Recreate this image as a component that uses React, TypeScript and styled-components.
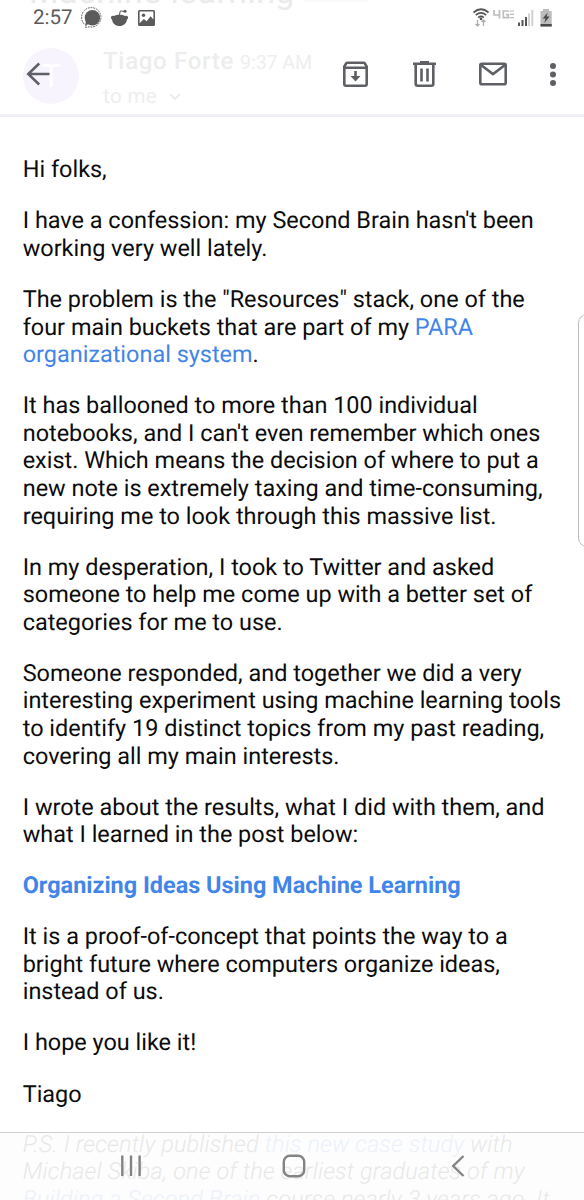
import React from "react";
import styled, { createGlobalStyle } from "styled-components";

const GlobalStyle = createGlobalStyle`
  * { box-sizing: border-box; }
  html, body { margin: 0; padding: 0; background: #fff; overflow: hidden; }
`;

const Screen = styled.main`
  position: relative;
  display: flex;
  flex-direction: column;
  width: 584px;
  height: 1200px;
  overflow: hidden;
  background: #fff;
  font-family: Roboto, "Liberation Sans", sans-serif;
  text-rendering: geometricPrecision;
`;

const Header = styled.header`
  position: relative;
  flex: none;
  height: 117px;
  border-bottom: 3px solid #eef0f3;
  overflow: hidden;
`;

const StatusBar = styled.div`
  position: relative;
  display: flex;
  justify-content: space-between;
  height: 36px;
  padding: 0 31px 0 33px;
`;

const StatusGroup = styled.div`
  display: flex;
  align-items: center;
`;

const Clock = styled.time`
  width: 47px;
  font-size: 20.5px;
  line-height: 38px;
  color: #5b5b5b;
`;

const Toolbar = styled.div`
  position: relative;
  display: flex;
  align-items: center;
  height: 75px;
  padding: 0 14px 0 22px;
`;

const ToolButton = styled.button<{ $gap?: number }>`
  display: flex;
  margin: 0 0 0 ${(p) => p.$gap ?? 0}px;
  padding: 0;
  border: 0;
  background: none;
  color: #5f6065;
`;

const Underlay = styled.div`
  position: absolute;
  inset: 0;
  white-space: nowrap;
`;

const Subject = styled.div`
  position: absolute;
  left: 29px;
  top: -28px;
  font: 400 34px/40px Roboto, sans-serif;
  letter-spacing: 0.4px;
  color: #ebebeb;
`;

const LabelEdge = styled.div`
  position: absolute;
  left: 304px;
  top: 0;
  width: 65px;
  height: 2px;
  background: #fafafa;
`;

const Avatar = styled.div`
  position: absolute;
  left: 23px;
  top: 48px;
  width: 56px;
  height: 56px;
  border-radius: 50%;
  background: #f7f4fd;
  color: #fff;
  font: 32px/56px Roboto, sans-serif;
  text-align: center;
`;

const Sender = styled.div`
  position: absolute;
  left: 103px;
  top: 45px;
  display: flex;
  align-items: baseline;
  font: 500 24px/32px Roboto, sans-serif;
  letter-spacing: 0.7px;
  color: #ededed;
`;

const SentAt = styled.span`
  margin-left: 6px;
  font-size: 19.6px;
  font-weight: 400;
  letter-spacing: -0.1px;
  color: #eeeeee;
`;

const Recipient = styled.div`
  position: absolute;
  left: 103px;
  top: 83px;
  display: flex;
  align-items: center;
  gap: 12px;
  font: 20.5px/28px Roboto, sans-serif;
  letter-spacing: 0.4px;
  color: #eeeeee;
`;

const Letter = styled.article`
  flex: none;
  padding: 39.3px 0 0 22.7px;
  font-size: 23.44px;
  line-height: 27.6px;
  color: #0c0c0c;
  white-space: nowrap;
`;

const Paragraph = styled.p<{ $faded?: boolean }>`
  margin: 0 0 23.45px;
  font-style: ${(p) => (p.$faded ? "italic" : "normal")};
  font-weight: ${(p) => (p.$faded ? 300 : 400)};
  letter-spacing: ${(p) => (p.$faded ? 0.15 : 0)}px;
  color: ${(p) => (p.$faded ? "#dedede" : "inherit")};
  &:last-child { margin-top: -0.9px; }
`;

const Line = styled.span`
  display: block;
`;

const Link = styled.a<{ $bold?: boolean; $faded?: boolean }>`
  color: ${(p) => (p.$faded ? "#e4ecfa" : "#4285e8")};
  font-weight: ${(p) => (p.$bold ? 700 : "inherit")};
`;

const EdgeHandle = styled.div`
  position: absolute;
  left: 578px;
  top: 314px;
  width: 20px;
  height: 233px;
  border: 1px solid #bcbcbc;
  border-radius: 9px;
  background: #fff;
`;

const NavShade = styled.div`
  position: absolute;
  left: 0;
  bottom: 0;
  width: 584px;
  height: 68px;
  border-top: 1px solid #cfcfcf;
  background: rgba(248, 248, 248, 0.35);
`;

const NavIcons = styled.nav`
  display: flex;
  align-items: center;
  height: 65px;
  padding-left: 119px;
  color: #838383;
`;

const NavButton = styled.button<{ $gap?: number }>`
  display: flex;
  margin: 0 0 0 ${(p) => p.$gap ?? 0}px;
  padding: 0;
  border: 0;
  background: none;
  color: inherit;
`;

const paragraphs: React.ReactNode[][] = [
  ["Hi folks,"],
  ["I have a confession: my Second Brain hasn't been", "working very well lately."],
  [
    "The problem is the \"Resources\" stack, one of the",
    <>four main buckets that are part of my <Link>PARA</Link></>,
    <><Link>organizational system</Link>.</>,
  ],
  [
    "It has ballooned to more than 100 individual",
    "notebooks, and I can't even remember which ones",
    "exist. Which means the decision of where to put a",
    "new note is extremely taxing and time-consuming,",
    "requiring me to look through this massive list.",
  ],
  [
    "In my desperation, I took to Twitter and asked",
    "someone to help me come up with a better set of",
    "categories for me to use.",
  ],
  [
    "Someone responded, and together we did a very",
    "interesting experiment using machine learning tools",
    "to identify 19 distinct topics from my past reading,",
    "covering all my main interests.",
  ],
  ["I wrote about the results, what I did with them, and", "what I learned in the post below:"],
  [<Link $bold>Organizing Ideas Using Machine Learning</Link>],
  [
    "It is a proof-of-concept that points the way to a",
    "bright future where computers organize ideas,",
    "instead of us.",
  ],
  ["I hope you like it!"],
  ["Tiago"],
];

const postscript: React.ReactNode[] = [
  <>P.S. I recently published <Link $faded>this new case study</Link> with</>,
  "Michael Skiba, one of the earliest graduates of my",
  <><Link $faded>Building a Second Brain</Link> course nearly 3 years ago. It</>,
];

const NotificationIcons = () => (
  <svg width="76" height="24" viewBox="80 5 76 24" fill="#5b5b5b">
    <circle cx="92.4" cy="16.7" r="7.7" />
    <path d="M86 20l-.8 4.3 5-1.5z" />
    <path d="M86.2 24.6a9.7 9.7 0 1 1 3 1.2l-3.8.6z" fill="none" stroke="#5b5b5b" strokeWidth="1" strokeDasharray="1.8 .9" />
    <path d="M111 16.5c0-1.6 1.4-2.3 2.9-1.6 3-1.7 8.2-1.7 11.2 0 1.5-.7 3 0 3 1.6 0 1-.5 1.7-1.2 2-.2 3.9-3.5 6.5-7.4 6.5s-7.2-2.6-7.4-6.5c-.7-.3-1.1-1-1.1-2z" />
    <path d="M119.3 14.5l1-4.5 4 .4" fill="none" stroke="#5b5b5b" strokeWidth="1" />
    <circle cx="125" cy="10.2" r="1.5" />
    <path fillRule="evenodd" d="M139.5 9h14q1.5 0 1.5 1.500v13q0 1.500-1.500 1.500h-14q-1.500 0-1.500-1.500v-13Q138 9 139.500 9zm.1 1.600v11.600l4.200-4.200 2.800 2.200 4-5 2.800 3.300v-7.900z" />
    <circle cx="143.5" cy="14.2" r="1.7" />
  </svg>
);

const SignalIcons = () => (
  <svg width="82" height="24" viewBox="471 5 82 24">
    <g fill="none" stroke="#555" strokeWidth="1.7">
      <path d="M473.5 11.5q7.5-6.5 15 0M475.8 14.2q5.200-4.500 10.400 0M478.200 16.600q2.800-2.300 5.600 0" />
    </g>
    <circle cx="481" cy="17.9" r="1.3" fill="#555" />
    <path d="M477.5 19v6m-2-2 2 2 2-2M483.5 25v-6m-2 2 2-2 2 2" fill="none" stroke="#aaa" strokeWidth="1.2" />
    <g fill="none" stroke="#bdbdbd" strokeWidth="1.7">
      <path d="M494 9v5h6.500M499.500 9v8.500M508.800 10H503.300v6.600h5v-3h-2.500" />
      <path d="M509.500 10h4.500M510 13.300h4M509.500 16.600h4.500" strokeWidth="1.2" />
    </g>
    <g strokeWidth="2">
      <path d="M519 25v-3.500M522.500 25v-6M526 25v-9" stroke="#555" />
      <path d="M529 25V12.500M532.300 25V9" stroke="#d2d2d2" />
    </g>
    <path d="M543 8h6v2h2.700v15.500h-11.200V10h2.500z" fill="#bcbcbc" />
    <path d="M540.500 23h11.200v2.500h-11.200zM547.700 11.500l-5 6h2.800l-1.200 4.500 5.300-6.500h-3z" fill="#494949" />
  </svg>
);

const App = () => (
  <Screen>
    <GlobalStyle />
    <Header>
      <Underlay>
        <Subject>Machine learning</Subject>
        <LabelEdge />
        <Avatar>T</Avatar>
        <Sender>Tiago Forte<SentAt>9:37 AM</SentAt></Sender>
        <Recipient>
          to me
          <svg width="12" height="8" viewBox="0 0 12 8" fill="none" stroke="#ececec" strokeWidth="2"><path d="M1 1l5 5 5-5" /></svg>
        </Recipient>
      </Underlay>
      <StatusBar>
        <StatusGroup><Clock>2:57</Clock><NotificationIcons /></StatusGroup>
        <StatusGroup><SignalIcons /></StatusGroup>
      </StatusBar>
      <Toolbar>
        <ToolButton aria-label="Back">
          <svg width="32" height="30" viewBox="22 58 32 30" fill="none" stroke="currentColor" strokeWidth="2.5"><path d="M49.500 73H28.200M39.200 62.500L28.200 73l11 10.500" /></svg>
        </ToolButton>
        <ToolButton aria-label="Archive" $gap={286}>
          <svg width="32" height="30" viewBox="340 58 32 30" fill="none" stroke="currentColor" strokeWidth="2.6">
            <path d="M344.300 65.500l2-3.200q.4-.6 1.200-.6h16q.8 0 1.200.6l2 3.200v17.600q0 1.600-1.600 1.600h-19.200q-1.600 0-1.600-1.600zM344.300 66.700h22.400" />
            <path d="M355.500 70v8" /><path d="M350.500 75h10l-5 5.500z" fill="currentColor" stroke="none" />
          </svg>
        </ToolButton>
        <ToolButton aria-label="Delete" $gap={37}>
          <svg width="32" height="30" viewBox="409 58 32 30" fill="none" stroke="currentColor" strokeWidth="2.6">
            <path d="M413 62.700h23M420 61.300h9M415.700 63v19.800q0 2 2 2h13.600q2 0 2-2V63M421.500 67.500v13M427.500 67.500v13" />
          </svg>
        </ToolButton>
        <ToolButton aria-label="Mark unread" $gap={36}>
          <svg width="34" height="30" viewBox="477 58 34 30" fill="none" stroke="currentColor" strokeWidth="2.6">
            <rect x="480.3" y="62.8" width="25.4" height="20.4" rx="1.5" /><path d="M481 64l12 9 12-9" />
          </svg>
        </ToolButton>
        <ToolButton aria-label="More" $gap={33}>
          <svg width="18" height="30" viewBox="544 58 18 30" fill="currentColor"><circle cx="553" cy="65" r="3" /><circle cx="553" cy="73.5" r="3" /><circle cx="553" cy="82" r="3" /></svg>
        </ToolButton>
      </Toolbar>
    </Header>
    <Letter>
      {paragraphs.map((lines, i) => (
        <Paragraph key={i}>{lines.map((line, j) => <Line key={j}>{line}</Line>)}</Paragraph>
      ))}
      <Paragraph $faded>{postscript.map((line, j) => <Line key={j}>{line}</Line>)}</Paragraph>
    </Letter>
    <EdgeHandle />
    <NavShade>
      <NavIcons>
        <NavButton aria-label="Recents">
          <svg width="24" height="24" viewBox="119 1154 24 24" fill="none" stroke="currentColor" strokeWidth="2.4"><path d="M122.300 1155.500v20.500M131 1155.500v20.500M139.600 1155.500v20.500" /></svg>
        </NavButton>
        <NavButton aria-label="Home" $gap={138}>
          <svg width="26" height="24" viewBox="281 1154 26 24" fill="none" stroke="currentColor" strokeWidth="2.4"><rect x="283.8" y="1155.8" width="20.4" height="20.4" rx="6" /></svg>
        </NavButton>
        <NavButton aria-label="Back" $gap={142}>
          <svg width="18" height="24" viewBox="449 1154 18 24" fill="none" stroke="currentColor" strokeWidth="2.4"><path d="M463.500 1156l-10.300 10 10.300 10" /></svg>
        </NavButton>
      </NavIcons>
    </NavShade>
  </Screen>
);

export default App;
